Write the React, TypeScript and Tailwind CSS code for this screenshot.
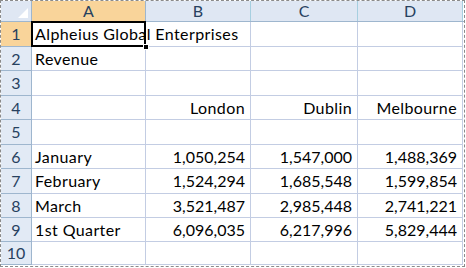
import React from 'react';

const cols = ['A', 'B', 'C', 'D'];

// each row: [A, B, C, D]
const rows: string[][] = [
  ['Alpheius Global Enterprises', '', '', ''],
  ['Revenue', '', '', ''],
  ['', '', '', ''],
  ['', 'London', 'Dublin', 'Melbourne'],
  ['', '', '', ''],
  ['January', '1,050,254', '1,547,000', '1,488,369'],
  ['February', '1,524,294', '1,685,548', '1,599,854'],
  ['March', '3,521,487', '2,985,448', '2,741,221'],
  ['1st Quarter', '6,096,035', '6,217,996', '5,829,444'],
  ['', '', '', ''],
];

const rowHeights = ['h-[25px]', 'h-[24px]', 'h-[25px]', 'h-[24px]', 'h-[25px]', 'h-[24px]', 'h-[25px]', 'h-[24px]', 'h-[24px]', 'h-[23px]'];
const colWidths = ['w-[114px]', 'w-[105px]', 'w-[107px]', 'w-[105px]'];

const isNumber = (v: string) => /^[\d,]+$/.test(v);

const App: React.FC = () => {
  return (
    <div className="w-[466px] h-[268px] bg-white overflow-hidden">
      <div
        className="w-[465px] h-[267px] border border-dashed border-[#8a8a8a] overflow-hidden text-black"
        style={{ fontFamily: 'Lato, "Open Sans", sans-serif' }}
      >
        {/* Column headers */}
        <div className="flex h-[21px] border-b border-[#9eb6ce]">
          <div className="relative w-[31px] shrink-0 bg-[#dfe7f3] border-r border-[#9eb6ce]">
            <svg className="absolute right-[3px] bottom-[3px]" width="10" height="10" viewBox="0 0 10 10">
              <polygon points="10,0 10,10 0,10" fill="#ffffff" />
            </svg>
          </div>
          {cols.map((c, i) => (
            <div
              key={c}
              className={`${colWidths[i]} shrink-0 flex items-center justify-center text-[16px] text-[#27415f] border-r ${
                i === 0 ? 'bg-[#f9d49a] border-[#9eb6ce]' : 'bg-[#dfe7f3] border-[#a6cfe0]'
              }`}
            >
              {c}
            </div>
          ))}
        </div>

        {/* Body rows */}
        {rows.map((r, ri) => (
          <div key={ri} className={`flex ${rowHeights[ri]}`}>
            <div
              className={`w-[31px] shrink-0 flex items-center justify-center text-[16px] text-[#27415f] border-r border-b border-[#9eb6ce] ${
                ri === 0 ? 'bg-[#f9d49a]' : 'bg-[#e2eaf5]'
              }`}
            >
              {ri + 1}
            </div>
            {r.map((v, ci) => {
              const isText = ci === 0 || ri === 0;
              const selected = ri === 0 && ci === 0;
              return (
                <div
                  key={ci}
                  className={`${colWidths[ci]} shrink-0 relative flex items-center text-[16px] border-r border-b border-[#c3cde3] ${
                    isText ? 'justify-start pl-[3px]' : 'justify-end pr-[5px]'
                  } ${selected ? 'z-10' : ''}`}
                >
                  <span className={`whitespace-nowrap ${isNumber(v) ? '' : 'tracking-[0.4px]'}`}>{v}</span>
                  {selected && (
                    <>
                      <div className="absolute -left-px -top-px -right-px -bottom-px border-2 border-black pointer-events-none" />
                      <div className="absolute right-[-4px] bottom-[-4px] w-[6px] h-[6px] bg-black border border-white" />
                    </>
                  )}
                </div>
              );
            })}
          </div>
        ))}
      </div>
    </div>
  );
};

export default App;
